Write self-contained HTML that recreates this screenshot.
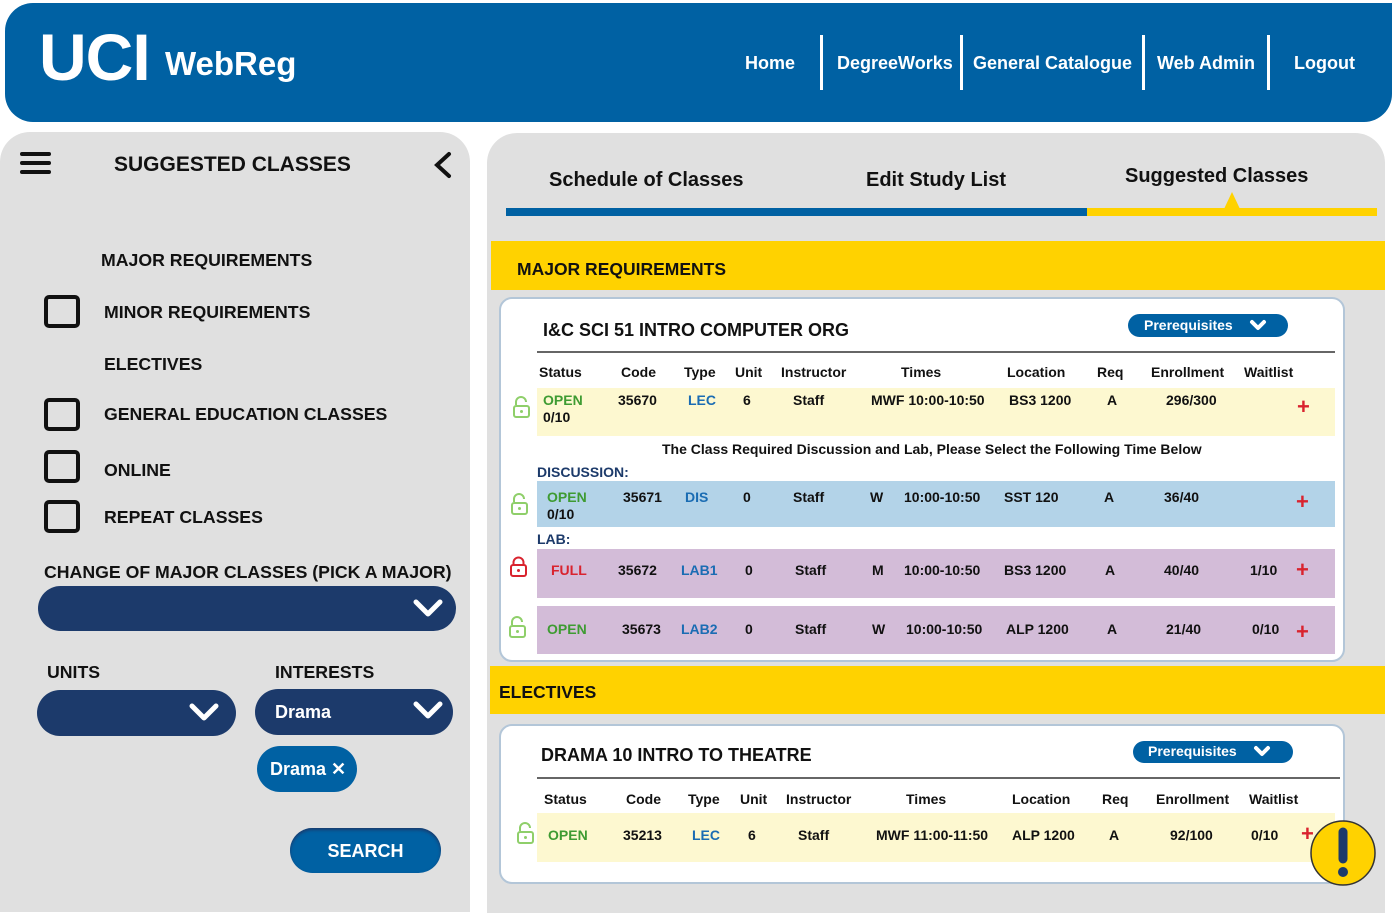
<!DOCTYPE html>
<html><head><meta charset="utf-8"><style>
*{margin:0;padding:0;box-sizing:border-box}
body{width:1392px;height:898px;background:#fff;position:relative;overflow:hidden;font-family:"Liberation Sans",Arial,sans-serif;font-weight:bold;color:#111}
.a{position:absolute}
.t{position:absolute;white-space:nowrap;font-size:14px;line-height:16px}
.g{color:#3e9b32}.b{color:#1a6cb3}.r{color:#d9232e}.n{color:#1c3a6a}
.cb{position:absolute;left:44px;width:36px;height:33px;border:4px solid #111;border-radius:5px}
.lab{position:absolute;font-size:17.7px;white-space:nowrap}
.dd{position:absolute;background:#1c3a6b;border-radius:24px}
.plus{position:absolute;color:#d9232e;font-size:22px;line-height:20px}
</style></head><body>
<!-- header -->
<div class="a" style="left:5px;top:3px;width:1387px;height:119px;background:#0061a3;border-radius:28px 0 28px 28px"></div>
<div class="t" style="left:39px;top:20px;font-size:66px;line-height:74px;color:#fff;letter-spacing:-1px">UCI</div>
<div class="t" style="left:165px;top:45px;font-size:33px;line-height:38px;color:#fff">WebReg</div>
<div class="t" style="left:745px;top:53px;font-size:18px;line-height:20px;color:#fff">Home</div>
<div class="t" style="left:837px;top:53px;font-size:18px;line-height:20px;color:#fff">DegreeWorks</div>
<div class="t" style="left:973px;top:53px;font-size:18px;line-height:20px;color:#fff">General Catalogue</div>
<div class="t" style="left:1157px;top:53px;font-size:18px;line-height:20px;color:#fff">Web Admin</div>
<div class="t" style="left:1294px;top:53px;font-size:18px;line-height:20px;color:#fff">Logout</div>
<div class="a" style="left:820px;top:35px;width:3px;height:55px;background:#fff"></div>
<div class="a" style="left:960px;top:35px;width:3px;height:55px;background:#fff"></div>
<div class="a" style="left:1142px;top:35px;width:3px;height:55px;background:#fff"></div>
<div class="a" style="left:1267px;top:35px;width:3px;height:55px;background:#fff"></div>

<!-- left panel -->
<div class="a" style="left:0;top:132px;width:470px;height:780px;background:#e0e0e0;border-radius:30px 30px 0 0"></div>
<div class="a" style="left:20px;top:152px;width:31px;height:4px;background:#111;border-radius:2px"></div>
<div class="a" style="left:20px;top:161px;width:31px;height:4px;background:#111;border-radius:2px"></div>
<div class="a" style="left:20px;top:170px;width:31px;height:4px;background:#111;border-radius:2px"></div>
<div class="t" style="left:114px;top:153px;font-size:21px;line-height:24px">SUGGESTED CLASSES</div>
<svg class="a" style="left:432px;top:151px" width="22" height="28"><path d="M17 3 L5 14 L17 25" stroke="#111" stroke-width="4" fill="none" stroke-linecap="round"/></svg>
<div class="lab" style="left:101px;top:250px">MAJOR REQUIREMENTS</div>
<div class="cb" style="top:295px"></div><div class="lab" style="left:104px;top:302px">MINOR REQUIREMENTS</div>
<div class="lab" style="left:104px;top:354px">ELECTIVES</div>
<div class="cb" style="top:398px"></div><div class="lab" style="left:104px;top:404px">GENERAL EDUCATION CLASSES</div>
<div class="cb" style="top:450px"></div><div class="lab" style="left:104px;top:460px">ONLINE</div>
<div class="cb" style="top:500px"></div><div class="lab" style="left:104px;top:507px">REPEAT CLASSES</div>
<div class="lab" style="left:44px;top:562px">CHANGE OF MAJOR CLASSES (PICK A MAJOR)</div>
<div class="dd" style="left:38px;top:586px;width:418px;height:45px"></div>
<svg class="a" style="left:412px;top:598px" width="32" height="22"><path d="M4 4 L16 16 L28 4" stroke="#fff" stroke-width="5" fill="none" stroke-linecap="round" stroke-linejoin="round"/></svg>
<div class="lab" style="left:47px;top:662px">UNITS</div>
<div class="lab" style="left:275px;top:662px">INTERESTS</div>
<div class="dd" style="left:37px;top:690px;width:199px;height:46px"></div>
<svg class="a" style="left:188px;top:702px" width="32" height="22"><path d="M4 4 L16 16 L28 4" stroke="#fff" stroke-width="5" fill="none" stroke-linecap="round" stroke-linejoin="round"/></svg>
<div class="dd" style="left:255px;top:689px;width:198px;height:46px"></div>
<div class="t" style="left:275px;top:701px;font-size:18px;line-height:22px;color:#fff">Drama</div>
<svg class="a" style="left:412px;top:700px" width="32" height="22"><path d="M4 4 L16 16 L28 4" stroke="#fff" stroke-width="5" fill="none" stroke-linecap="round" stroke-linejoin="round"/></svg>
<div class="a" style="left:257px;top:746px;width:100px;height:46px;background:#0061a3;border-radius:23px"></div>
<div class="t" style="left:270px;top:758px;font-size:18px;line-height:22px;color:#fff">Drama ✕</div>
<div class="a" style="left:290px;top:828px;width:151px;height:45px;background:#0061a3;border-radius:23px;box-shadow:inset 0 2px 3px #1c3a6b"></div>
<div class="t" style="left:290px;top:840px;width:151px;text-align:center;font-size:18px;line-height:22px;color:#fff">SEARCH</div>

<!-- right panel -->
<div class="a" style="left:487px;top:133px;width:898px;height:780px;background:#e0e0e0;border-radius:30px 30px 0 0"></div>
<div class="t" style="left:549px;top:168px;font-size:20px;line-height:24px">Schedule of Classes</div>
<div class="t" style="left:866px;top:168px;font-size:20px;line-height:24px">Edit Study List</div>
<div class="t" style="left:1125px;top:164px;font-size:20px;line-height:24px">Suggested Classes</div>
<div class="a" style="left:506px;top:208px;width:581px;height:8px;background:#0061a3"></div>
<div class="a" style="left:1087px;top:208px;width:290px;height:8px;background:#ffd200"></div>
<svg class="a" style="left:1222px;top:192px" width="20" height="17"><path d="M10 0 L18 17 L2 17Z" fill="#ffd200"/></svg>

<div class="a" style="left:491px;top:241px;width:894px;height:49px;background:#ffd200"></div>
<div class="t" style="left:517px;top:259px;font-size:17.5px;line-height:20px">MAJOR REQUIREMENTS</div>
<div class="a" style="left:490px;top:666px;width:895px;height:48px;background:#ffd200"></div>
<div class="t" style="left:499px;top:682px;font-size:17.5px;line-height:20px">ELECTIVES</div>

<!-- card 1 -->
<div class="a" style="left:499px;top:297px;width:846px;height:365px;background:#fff;border:2px solid #b3c6d8;border-radius:13px"></div>
<div class="t" style="left:543px;top:319px;font-size:18px;line-height:22px">I&amp;C SCI 51 INTRO COMPUTER ORG</div>
<div class="a" style="left:1128px;top:314px;width:160px;height:23px;background:#0061a3;border-radius:12px"></div>
<div class="t" style="left:1144px;top:317px;color:#fff">Prerequisites</div>
<svg class="a" style="left:1249px;top:319px" width="18" height="14"><path d="M3 3 L9 9 L15 3" stroke="#fff" stroke-width="4" fill="none" stroke-linecap="round" stroke-linejoin="round"/></svg>
<div class="a" style="left:537px;top:351px;width:798px;height:2px;background:#666"></div>
<div class="t" style="left:539px;top:364px">Status</div><div class="t" style="left:621px;top:364px">Code</div><div class="t" style="left:684px;top:364px">Type</div><div class="t" style="left:735px;top:364px">Unit</div><div class="t" style="left:781px;top:364px">Instructor</div><div class="t" style="left:901px;top:364px">Times</div><div class="t" style="left:1007px;top:364px">Location</div><div class="t" style="left:1097px;top:364px">Req</div><div class="t" style="left:1151px;top:364px">Enrollment</div><div class="t" style="left:1244px;top:364px">Waitlist</div>

<div class="a" style="left:537px;top:388px;width:798px;height:48px;background:#fdf8d0"></div>
<svg class="a" style="left:512px;top:396px" width="20" height="24"><path d="M4 9 V6 A5 5 0 0 1 14 6" stroke="#8fcf6a" stroke-width="2" fill="none"/><rect x="2" y="10" width="15" height="11" rx="2" stroke="#8fcf6a" stroke-width="2" fill="none"/><circle cx="9.5" cy="15.5" r="1.5" fill="#8fcf6a"/></svg>
<div class="t g" style="left:543px;top:392px">OPEN</div><div class="t" style="left:543px;top:409px">0/10</div>
<div class="t" style="left:618px;top:392px">35670</div><div class="t b" style="left:688px;top:392px">LEC</div><div class="t" style="left:743px;top:392px">6</div><div class="t" style="left:793px;top:392px">Staff</div><div class="t" style="left:871px;top:392px">MWF 10:00-10:50</div><div class="t" style="left:1009px;top:392px">BS3 1200</div><div class="t" style="left:1107px;top:392px">A</div><div class="t" style="left:1166px;top:392px">296/300</div>
<div class="plus" style="left:1297px;top:397px">+</div>
<div class="t" style="left:662px;top:441px">The Class Required Discussion and Lab, Please Select the Following Time Below</div>
<div class="t n" style="left:537px;top:464px">DISCUSSION:</div>

<div class="a" style="left:537px;top:481px;width:798px;height:46px;background:#b3d3e8"></div>
<svg class="a" style="left:510px;top:493px" width="20" height="24"><path d="M4 9 V6 A5 5 0 0 1 14 6" stroke="#8fcf6a" stroke-width="2" fill="none"/><rect x="2" y="10" width="15" height="11" rx="2" stroke="#8fcf6a" stroke-width="2" fill="none"/><circle cx="9.5" cy="15.5" r="1.5" fill="#8fcf6a"/></svg>
<div class="t g" style="left:547px;top:489px">OPEN</div><div class="t" style="left:547px;top:506px">0/10</div>
<div class="t" style="left:623px;top:489px">35671</div><div class="t b" style="left:685px;top:489px">DIS</div><div class="t" style="left:743px;top:489px">0</div><div class="t" style="left:793px;top:489px">Staff</div><div class="t" style="left:870px;top:489px">W</div><div class="t" style="left:904px;top:489px">10:00-10:50</div><div class="t" style="left:1004px;top:489px">SST 120</div><div class="t" style="left:1104px;top:489px">A</div><div class="t" style="left:1164px;top:489px">36/40</div>
<div class="plus" style="left:1296px;top:492px">+</div>
<div class="t n" style="left:537px;top:531px">LAB:</div>

<div class="a" style="left:537px;top:549px;width:798px;height:49px;background:#d3bcd8"></div>
<svg class="a" style="left:509px;top:556px" width="20" height="22"><path d="M4.5 10 V6.5 A5 5 0 0 1 14.5 6.5 V10" stroke="#d9232e" stroke-width="2" fill="none"/><rect x="2" y="9" width="15" height="11" rx="2" stroke="#d9232e" stroke-width="2" fill="none"/><circle cx="9.5" cy="14.5" r="1.5" fill="#d9232e"/></svg>
<div class="t r" style="left:551px;top:562px">FULL</div>
<div class="t" style="left:618px;top:562px">35672</div><div class="t b" style="left:681px;top:562px">LAB1</div><div class="t" style="left:745px;top:562px">0</div><div class="t" style="left:795px;top:562px">Staff</div><div class="t" style="left:872px;top:562px">M</div><div class="t" style="left:904px;top:562px">10:00-10:50</div><div class="t" style="left:1004px;top:562px">BS3 1200</div><div class="t" style="left:1105px;top:562px">A</div><div class="t" style="left:1164px;top:562px">40/40</div><div class="t" style="left:1250px;top:562px">1/10</div>
<div class="plus" style="left:1296px;top:560px">+</div>

<div class="a" style="left:537px;top:606px;width:798px;height:48px;background:#d3bcd8"></div>
<svg class="a" style="left:508px;top:616px" width="20" height="24"><path d="M4 9 V6 A5 5 0 0 1 14 6" stroke="#8fcf6a" stroke-width="2" fill="none"/><rect x="2" y="10" width="15" height="11" rx="2" stroke="#8fcf6a" stroke-width="2" fill="none"/><circle cx="9.5" cy="15.5" r="1.5" fill="#8fcf6a"/></svg>
<div class="t g" style="left:547px;top:621px">OPEN</div>
<div class="t" style="left:622px;top:621px">35673</div><div class="t b" style="left:681px;top:621px">LAB2</div><div class="t" style="left:745px;top:621px">0</div><div class="t" style="left:795px;top:621px">Staff</div><div class="t" style="left:872px;top:621px">W</div><div class="t" style="left:906px;top:621px">10:00-10:50</div><div class="t" style="left:1006px;top:621px">ALP 1200</div><div class="t" style="left:1107px;top:621px">A</div><div class="t" style="left:1166px;top:621px">21/40</div><div class="t" style="left:1252px;top:621px">0/10</div>
<div class="plus" style="left:1296px;top:622px">+</div>

<!-- card 2 -->
<div class="a" style="left:499px;top:724px;width:846px;height:160px;background:#fff;border:2px solid #b3c6d8;border-radius:13px"></div>
<div class="t" style="left:541px;top:744px;font-size:18px;line-height:22px">DRAMA 10 INTRO TO THEATRE</div>
<div class="a" style="left:1133px;top:741px;width:160px;height:22px;background:#0061a3;border-radius:12px"></div>
<div class="t" style="left:1148px;top:743px;color:#fff">Prerequisites</div>
<svg class="a" style="left:1253px;top:745px" width="18" height="14"><path d="M3 3 L9 9 L15 3" stroke="#fff" stroke-width="4" fill="none" stroke-linecap="round" stroke-linejoin="round"/></svg>
<div class="a" style="left:537px;top:777px;width:803px;height:2px;background:#666"></div>
<div class="t" style="left:544px;top:791px">Status</div><div class="t" style="left:626px;top:791px">Code</div><div class="t" style="left:688px;top:791px">Type</div><div class="t" style="left:740px;top:791px">Unit</div><div class="t" style="left:786px;top:791px">Instructor</div><div class="t" style="left:906px;top:791px">Times</div><div class="t" style="left:1012px;top:791px">Location</div><div class="t" style="left:1102px;top:791px">Req</div><div class="t" style="left:1156px;top:791px">Enrollment</div><div class="t" style="left:1249px;top:791px">Waitlist</div>
<div class="a" style="left:537px;top:813px;width:798px;height:49px;background:#fdf8d0"></div>
<svg class="a" style="left:516px;top:822px" width="20" height="24"><path d="M4 9 V6 A5 5 0 0 1 14 6" stroke="#8fcf6a" stroke-width="2" fill="none"/><rect x="2" y="10" width="15" height="11" rx="2" stroke="#8fcf6a" stroke-width="2" fill="none"/><circle cx="9.5" cy="15.5" r="1.5" fill="#8fcf6a"/></svg>
<div class="t g" style="left:548px;top:827px">OPEN</div>
<div class="t" style="left:623px;top:827px">35213</div><div class="t b" style="left:692px;top:827px">LEC</div><div class="t" style="left:748px;top:827px">6</div><div class="t" style="left:798px;top:827px">Staff</div><div class="t" style="left:876px;top:827px">MWF 11:00-11:50</div><div class="t" style="left:1012px;top:827px">ALP 1200</div><div class="t" style="left:1109px;top:827px">A</div><div class="t" style="left:1170px;top:827px">92/100</div><div class="t" style="left:1251px;top:827px">0/10</div>
<div class="plus" style="left:1301px;top:824px">+</div>
<svg class="a" style="left:1309px;top:819px" width="68" height="68"><circle cx="34" cy="34" r="32" fill="#ffd200" stroke="#333" stroke-width="1.5"/><line x1="34" y1="13" x2="34" y2="40" stroke="#1c3a6b" stroke-width="9" stroke-linecap="round"/><circle cx="34" cy="53" r="5" fill="#1c3a6b"/></svg>
</body></html>
